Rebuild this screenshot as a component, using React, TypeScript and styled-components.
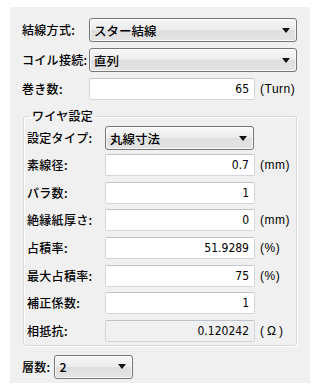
import React from "react";
import styled, { createGlobalStyle } from "styled-components";

const Global = createGlobalStyle`
  html, body { margin: 0; padding: 0; background: #ffffff; }
  body {
    font-family: "Noto Sans CJK JP", "Noto Sans", "Liberation Sans", sans-serif;
    font-size: 12px;
    color: #000000;
  }
`;

const Panel = styled.div`
  margin: 7px 0 0 10px;
  width: 300px;
  height: 376px;
  background: #f0f0f0;
  box-sizing: border-box;
  padding: 11px 0 0 12px;
  display: flex;
  flex-direction: column;
`;

const TopRows = styled.div`
  display: flex;
  flex-direction: column;
  gap: 6px;
`;

const Row = styled.div<{ $labelWidth: number }>`
  display: grid;
  grid-template-columns: ${(p) => p.$labelWidth}px auto auto;
  justify-content: start;
  align-items: center;
  column-gap: 5px;
`;

const Label = styled.span`
  line-height: 14px;
  white-space: nowrap;
  letter-spacing: 0.3px;
  font-weight: 500;
`;

const Combo = styled.div<{ $width: number }>`
  width: ${(p) => p.$width}px;
  height: 24px;
  box-sizing: border-box;
  border: 1px solid #767676;
  border-radius: 3px;
  background: linear-gradient(to bottom, #f7f7f7 0%, #ececec 48%, #dfdfdf 52%, #e4e4e4 100%);
  box-shadow: inset 0 0 0 1px rgba(255, 255, 255, 0.7);
  display: flex;
  align-items: center;
  justify-content: space-between;
  padding: 0 6px 0 4px;
  font-size: 12.5px;
  font-weight: 500;
  color: #000;
`;

const Arrow = () => (
  <svg width="8" height="5" viewBox="0 0 8 5">
    <path d="M0 0 H8 L4 5 Z" fill="#111" />
  </svg>
);

const Field = styled.div<{ $width: number; $readOnly?: boolean }>`
  width: ${(p) => p.$width}px;
  height: 22px;
  box-sizing: border-box;
  border: 1px solid #d3d7dc;
  border-top-color: #bfc4ca;
  border-radius: 2px;
  background: ${(p) => (p.$readOnly ? "#f0f0f0" : "#ffffff")};
  display: flex;
  align-items: center;
  justify-content: flex-end;
  padding-right: 5px;
  font-family: "DejaVu Sans Condensed", "Liberation Sans", sans-serif;
  font-size: 12px;
  color: #000;
`;

const Unit = styled.span<{ $wide?: boolean }>`
  font-family: "Liberation Sans", sans-serif;
  font-size: 12px;
  letter-spacing: ${(p) => (p.$wide ? "3px" : "0.5px")};
  white-space: nowrap;
`;

const Group = styled.fieldset`
  margin: 9px 0 0 1px;
  width: 274px;
  box-sizing: border-box;
  border: 1px solid #d5dadf;
  border-radius: 3px;
  box-shadow: inset 1px 1px 0 #ffffff, 1px 1px 0 #ffffff;
  padding: 3px 0 3px 3px;
  display: flex;
  flex-direction: column;
  gap: 5.67px;
  min-width: 0;
`;

const Legend = styled.legend`
  margin-left: 3px;
  padding: 0 2px;
  line-height: 14px;
  letter-spacing: 0.3px;
  font-weight: 500;
`;

const GroupCombo = styled.div`
  margin-bottom: -1.67px;
`;

const Bottom = styled.div`
  margin-top: 9px;
  display: flex;
  align-items: center;
  gap: 4px;
`;

type FieldRow = { label: string; value: string; unit?: string; wide?: boolean; ro?: boolean };

const groupRows: FieldRow[] = [
  { label: "素線径:", value: "0.7", unit: "(mm)" },
  { label: "パラ数:", value: "1" },
  { label: "絶縁紙厚さ:", value: "0", unit: "(mm)" },
  { label: "占積率:", value: "51.9289", unit: "(%)" },
  { label: "最大占積率:", value: "75", unit: "(%)" },
  { label: "補正係数:", value: "1" },
  { label: "相抵抗:", value: "0.120242", unit: "(Ω)", wide: true, ro: true },
];

export default function App() {
  return (
    <>
      <Global />
      <Panel>
        <TopRows>
          <Row $labelWidth={62}>
            <Label>結線方式:</Label>
            <Combo $width={208}>
              <span>スター結線</span>
              <Arrow />
            </Combo>
          </Row>
          <Row $labelWidth={62}>
            <Label>コイル接続:</Label>
            <Combo $width={208}>
              <span>直列</span>
              <Arrow />
            </Combo>
          </Row>
          <Row $labelWidth={62}>
            <Label>巻き数:</Label>
            <Field $width={166}>65</Field>
            <Unit>(Turn)</Unit>
          </Row>
        </TopRows>
        <Group>
          <Legend>ワイヤ設定</Legend>
          <GroupCombo>
            <Row $labelWidth={73}>
              <Label>設定タイプ:</Label>
              <Combo $width={149}>
                <span>丸線寸法</span>
                <Arrow />
              </Combo>
            </Row>
          </GroupCombo>
          {groupRows.map((r) => (
            <Row key={r.label} $labelWidth={73}>
              <Label>{r.label}</Label>
              <Field $width={150} $readOnly={r.ro}>
                {r.value}
              </Field>
              {r.unit ? <Unit $wide={r.wide}>{r.unit}</Unit> : <span />}
            </Row>
          ))}
        </Group>
        <Bottom>
          <Label>層数:</Label>
          <Combo $width={79}>
            <span>2</span>
            <Arrow />
          </Combo>
        </Bottom>
      </Panel>
    </>
  );
}
